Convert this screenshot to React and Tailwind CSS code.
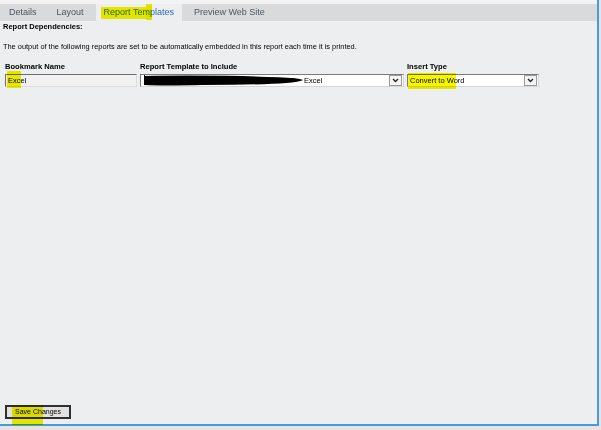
const FONT = { fontFamily: '"Liberation Sans", Arial, sans-serif' };

function Chevron() {
  return (
    <svg width="7" height="5" viewBox="0 0 7 5">
      <path d="M1 1 L3.5 3.5 L6 1" fill="none" stroke="#222" strokeWidth="1.3" />
    </svg>
  );
}

function Highlight({ className }) {
  return <span className={`pointer-events-none absolute bg-[#f6f600] mix-blend-multiply ${className}`} />;
}

function Select({ width, children }) {
  return (
    <div
      className={`relative flex h-[13px] items-center border border-t-[#7a7a7a] border-l-[#7a7a7a] border-r-[#d6d6d6] border-b-[#d6d6d6] bg-white ${width}`}
    >
      <div className="relative flex-1 overflow-hidden pl-[2px] text-[7.5px] leading-[11px] text-black">{children}</div>
      <div className="mr-[1px] flex h-[11px] w-[13px] items-center justify-center border border-[#9a9a9a] bg-[#f4f4f4]">
        <Chevron />
      </div>
    </div>
  );
}

const TABS = ['Details', 'Layout', 'Report Templates', 'Preview Web Site'];

export default function App() {
  return (
    <div className="h-[430px] w-[601px] overflow-hidden bg-[#e4e4e4]" style={FONT}>
      <div className="relative flex h-[426px] w-[599px] flex-col border-r-2 border-b-2 border-[#4c9bd8] bg-[#eceef0]">
        <div className="h-[4px] bg-[#f3f3f3]" />
        <div className="flex h-[17px] gap-[4px] bg-[#d9dadc] pl-[1px]">
          {TABS.map((t) => (
            <div
              key={t}
              className={
                t === 'Report Templates'
                  ? 'flex items-center bg-[#eceef0] px-[8px] text-[9px] text-[#2d6fb6]'
                  : 'flex items-center px-[8px] text-[9px] text-[#4a5663]'
              }
            >
              {t}
            </div>
          ))}
        </div>

        <div className="flex flex-1 flex-col pl-[3px]">
          <div className="mt-[1px] h-[10px] text-[7.5px] font-bold leading-[10px] text-black">Report Dependencies:</div>
          <div className="mt-[10px] h-[10px] text-[7.4px] leading-[10px] text-black">
            The output of the following reports are set to be automatically embedded in this report each time it is printed.
          </div>

          <div className="mt-[10px] flex gap-[3px] pl-[2px]">
            <div className="flex w-[132px] flex-col">
              <div className="h-[10px] text-[7.6px] font-bold leading-[10px] text-black">Bookmark Name</div>
              <div className="mt-[2px] h-[13px] border border-t-[#6f6f6f] border-l-[#6f6f6f] border-r-[#dcdcdc] border-b-[#dcdcdc] bg-[#f1f1f1] pl-[2px] text-[7.5px] leading-[11px] text-black">
                Excel
              </div>
            </div>
            <div className="flex w-[264px] flex-col">
              <div className="h-[10px] text-[7.6px] font-bold leading-[10px] text-black">Report Template to Include</div>
              <div className="mt-[2px]">
                <Select width="w-[264px]">
                  <div className="flex items-center">
                    <svg width="160" height="11" viewBox="0 0 162 11" className="shrink-0">
                      <path
                        d="M1 0 L2 0 L2 1 Q40 0 100 1 Q140 2 152 3 Q160 4 162 5 Q158 7 145 8 Q120 10 60 10 Q20 11 1 10 Z"
                        fill="#000"
                      />
                    </svg>
                    <span className="ml-[1px]">Excel</span>
                  </div>
                </Select>
              </div>
            </div>
            <div className="flex w-[132px] flex-col">
              <div className="h-[10px] text-[7.6px] font-bold leading-[10px] text-black">Insert Type</div>
              <div className="mt-[2px]">
                <Select width="w-[132px]">Convert to Word</Select>
              </div>
            </div>
          </div>

          <div className="mt-auto mb-[5px] pl-[2px]">
            <button className="flex h-[14px] w-[66px] items-center justify-center border-2 border-[#2f2f2f] bg-[#e1e1e1] text-[7px] text-black">
              Save Changes
            </button>
          </div>
        </div>

        <Highlight className="left-[101px] top-[7px] h-[12px] w-[51px]" />
        <Highlight className="left-[146px] top-[4px] h-[16px] w-[6px]" />
        <Highlight className="left-[7px] top-[71px] h-[17px] w-[14px]" />
        <Highlight className="left-[408px] top-[73px] h-[16px] w-[48px]" />
        <Highlight className="left-[12px] top-[405px] h-[20px] w-[31px]" />
      </div>
    </div>
  );
}
